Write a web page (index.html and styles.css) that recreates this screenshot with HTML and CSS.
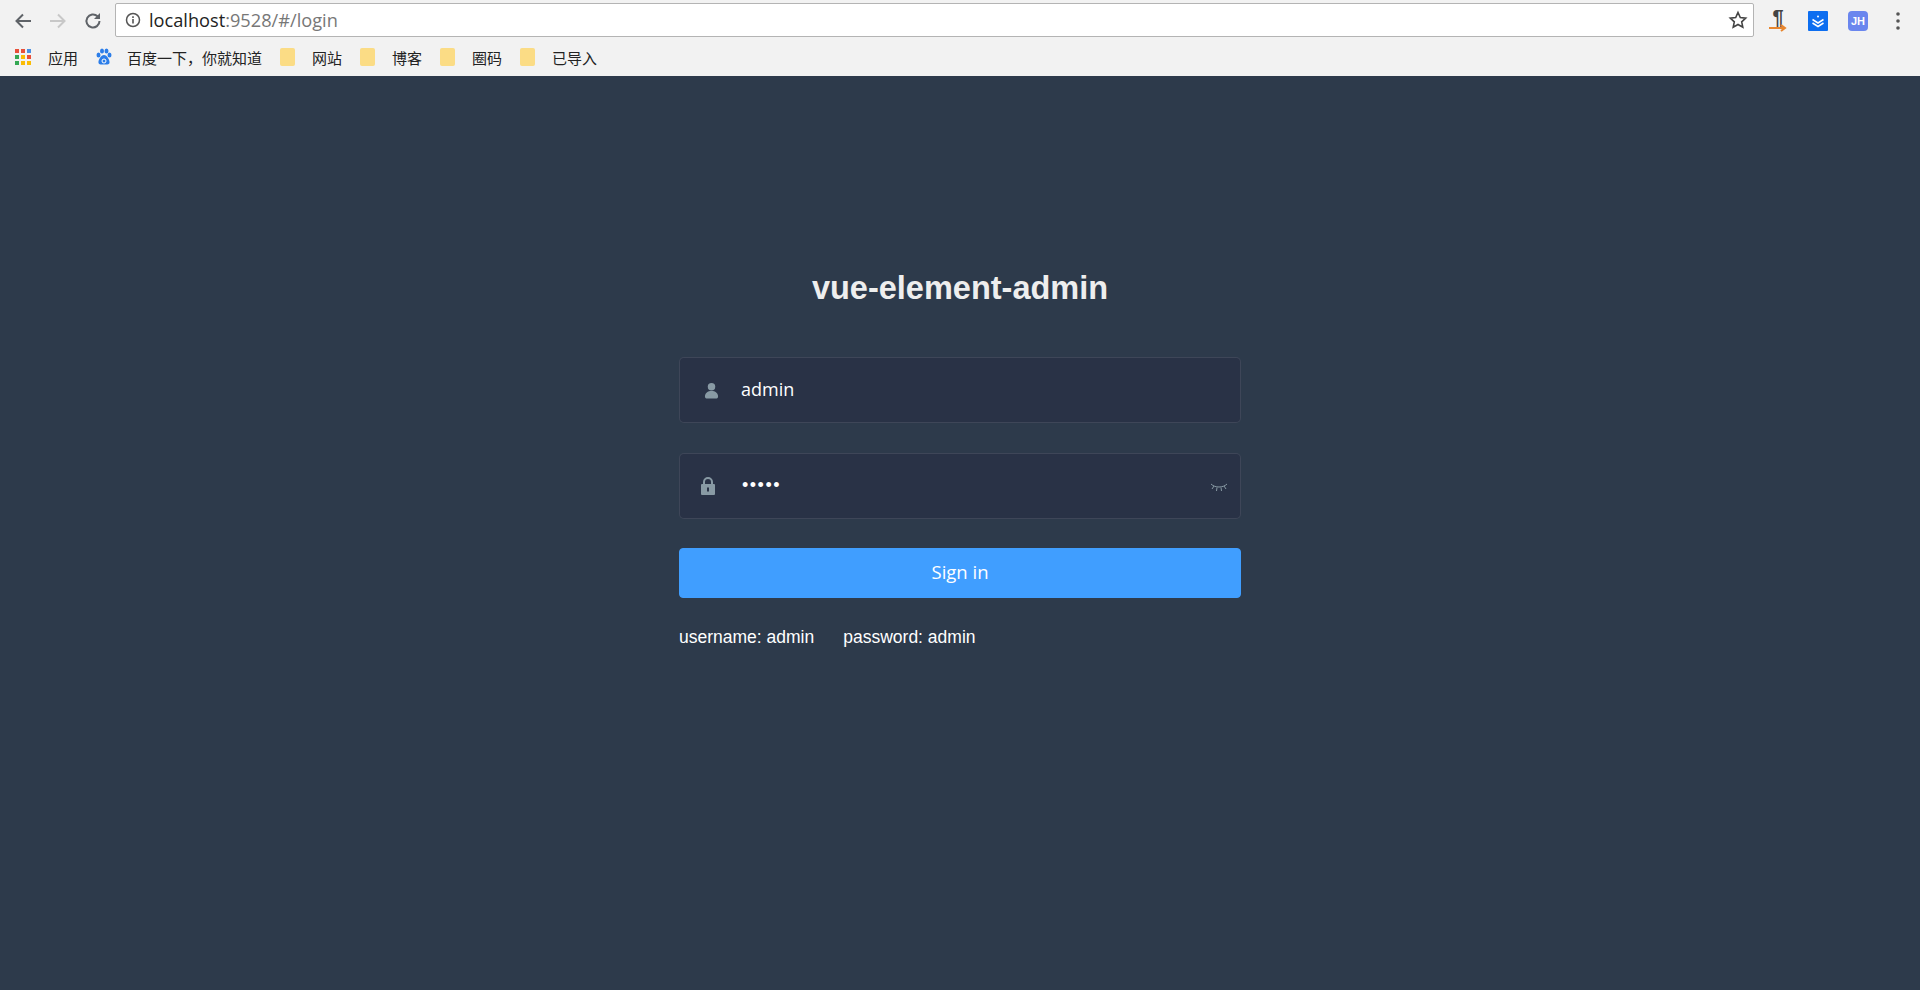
FILE: index.html
```html
<!doctype html>
<html lang="en">
<head>
<meta charset="UTF-8">
<title>vue-element-admin</title>
<link rel="stylesheet" href="styles.css">
</head>
<body>
	<div class="toolbar">
		<svg class="nav" width="22" height="22" viewBox="0 0 22 22"><path d="M19 11H5M11 4.500L4.500 11l6.500 6.500" fill="none" stroke="#5f6368" stroke-width="2"/></svg>
		<svg class="nav" width="22" height="22" viewBox="0 0 22 22"><path d="M3 11h14M11 4.500l6.500 6.500L11 17.500" fill="none" stroke="#c8c8c8" stroke-width="2"/></svg>
		<svg class="nav" width="22" height="22" viewBox="0 0 22 22"><path d="M17.500 11a6.500 6.500 0 1 1-2-4.700" fill="none" stroke="#5f6368" stroke-width="2"/><path d="M18 3v6h-6z" fill="#5f6368"/></svg>
		<div class="address">
			<svg width="16" height="16" viewBox="0 0 16 16"><circle cx="8" cy="8" r="6.500" fill="none" stroke="#555" stroke-width="1.500"/><path d="M7.200 7h1.600v4.500H7.200zM7.200 4.300h1.600v1.600H7.200z" fill="#555"/></svg>
			<span class="url"><b>localhost</b>:9528/#/login</span>
			<svg class="star" width="20" height="20" viewBox="0 0 20 20"><path d="M10 2.500l2.300 5 5.400.6-4 3.700 1.100 5.400-4.800-2.700-4.800 2.700 1.100-5.400-4-3.700 5.400-.6z" fill="none" stroke="#444" stroke-width="1.600"/></svg>
		</div>
		<div class="exts">
			<div class="ext-para">
				<span>¶</span>
				<svg width="20" height="8" viewBox="0 0 20 8"><path d="M1 4h15M13 1l4 3-4 3" fill="none" stroke="#e8862e" stroke-width="2"/></svg>
			</div>
			<svg width="20" height="20" viewBox="0 0 20 20"><rect width="20" height="20" rx="1" fill="#0d6ef0"/><path d="M4.500 8.500l5.500 3.500 5.500-3.500M4.500 12l5.500 3.500 5.500-3.500" fill="none" stroke="#fff" stroke-width="1.500"/><circle cx="10" cy="5.500" r="1" fill="#fff"/></svg>
			<div class="ext-jh">JH</div>
			<svg class="dots" width="4" height="18" viewBox="0 0 4 18"><circle cx="2" cy="2" r="1.800" fill="#555"/><circle cx="2" cy="9" r="1.800" fill="#555"/><circle cx="2" cy="16" r="1.800" fill="#555"/></svg>
		</div>
	</div>
	<div class="bookmarks">
		<div class="bm">
			<svg width="16" height="16" viewBox="0 0 16 16">
				<rect x="0" y="0" width="4" height="4" fill="#e8503a"/><rect x="6" y="0" width="4" height="4" fill="#e8503a"/><rect x="12" y="0" width="4" height="4" fill="#4a90e2"/>
				<rect x="0" y="6" width="4" height="4" fill="#34a853"/><rect x="6" y="6" width="4" height="4" fill="#fbbc05"/><rect x="12" y="6" width="4" height="4" fill="#e8503a"/>
				<rect x="0" y="12" width="4" height="4" fill="#34a853"/><rect x="6" y="12" width="4" height="4" fill="#fbbc05"/><rect x="12" y="12" width="4" height="4" fill="#fbbc05"/>
			</svg>
			<span>应用</span>
		</div>
		<div class="bm bm-baidu">
			<svg width="16" height="18" viewBox="0 0 16 18" fill="#2b7de9"><ellipse cx="2.500" cy="7" rx="2" ry="2.600"/><ellipse cx="6" cy="3" rx="2" ry="2.600"/><ellipse cx="10.500" cy="3" rx="2" ry="2.600"/><ellipse cx="13.500" cy="7" rx="2" ry="2.600"/><path d="M8 7c3 0 6 5 5.500 8-.5 2-3.500 1.500-5.500 1.500s-5 .5-5.500-1.500C2 12 5 7 8 7z"/><circle cx="8" cy="13" r="2" fill="none" stroke="#fff"/></svg>
			<span>百度一下，你就知道</span>
		</div>
		<div class="bm"><i class="folder"></i><span>网站</span></div>
		<div class="bm"><i class="folder"></i><span>博客</span></div>
		<div class="bm"><i class="folder"></i><span>圈码</span></div>
		<div class="bm"><i class="folder"></i><span>已导入</span></div>
	</div>
	<div class="login">
		<div class="form">
			<h3 class="title">vue-element-admin</h3>
			<div class="field">
				<svg class="icon" width="15" height="17" viewBox="0 0 16 17"><circle cx="8" cy="4.500" r="4" fill="#889aa4"/><path d="M1 15c0-4 3-6 7-6s7 2 7 6c0 1-.6 2-1.500 2h-11C1.600 17 1 16 1 15z" fill="#889aa4"/></svg>
				<span class="value">admin</span>
			</div>
			<div class="field">
				<svg class="icon icon-lock" width="14" height="18" viewBox="1 0 14 18"><path d="M4 8V5a4 4 0 0 1 8 0v3" fill="none" stroke="#889aa4" stroke-width="2"/><path d="M2 7h12a1 1 0 0 1 1 1v9a1 1 0 0 1-1 1H2a1 1 0 0 1-1-1V8a1 1 0 0 1 1-1z" fill="#889aa4"/><rect x="7" y="10.500" width="2" height="4" fill="#293246"/></svg>
				<span class="value dots-pw">•••••</span>
				<svg class="eye" width="18" height="10" viewBox="0 0 18 10"><path d="M1 2c4 4 12 4 16 0M4 4L2 7M7 5.500L6.500 9M11 5.500l.5 3.500M14 4l2 3" fill="none" stroke="#889aa4" stroke-width="1"/></svg>
			</div>
			<button class="btn">Sign in</button>
			<div class="tips"><span>username: admin</span><span>password: admin</span></div>
		</div>
	</div>
</body>
</html>
```

FILE: styles.css
```css
html,body{
	height:100%;
}
body{
	margin:0;
	display:flex;
	flex-direction:column;
	background:#2d3a4b;
	font-family:"Liberation Sans","Noto Sans CJK SC",sans-serif;
	overflow:hidden;
}
.toolbar{
	height:42px;
	flex:none;
	display:flex;
	align-items:center;
	background:#f2f2f2;
	padding:0 0 0 12px;
}
.nav{
	margin-right:13px;
}
.address{
	width:1639px;
	height:34px;
	box-sizing:border-box;
	margin:0 0 2px -2px;
	display:flex;
	align-items:center;
	gap:8px;
	padding:0 5px 0 9px;
	background:#fff;
	border:1px solid #b4b4b4;
	border-radius:2px;
}
.url{
	flex:1;
	font-family:"Open Sans","Liberation Sans",sans-serif;
	font-size:18.2px;
	color:#777;
}
.url b{
	font-weight:normal;
	color:#222;
}
.exts{
	flex:1;
	display:flex;
	align-items:center;
	gap:20px;
	padding-left:14px;
}
.ext-para{
	width:20px;
	display:flex;
	flex-direction:column;
	align-items:center;
	font:bold 20px/15px "Liberation Sans",sans-serif;
	color:#444;
}
.ext-para svg{
	margin-top:-1px;
}
.ext-jh{
	width:20px;
	height:20px;
	border-radius:4px;
	background:#6a86ee;
	color:#fff;
	font-size:11px;
	font-weight:bold;
	line-height:20px;
	text-align:center;
}
.dots{
	margin-left:8px;
}
.bookmarks{
	height:34px;
	flex:none;
	display:flex;
	align-items:center;
	gap:18px;
	box-sizing:border-box;
	padding:0 0 4px 15px;
	background:#f2f2f2;
	font-size:15px;
	color:#222;
}
.bm{
	display:flex;
	align-items:center;
	gap:17px;
}
.bm-baidu{
	gap:15px;
}
.folder{
	display:block;
	width:15px;
	height:18px;
	border-radius:2px;
	background:#fbdc85;
}
.login{
	flex:1;
	background:#2d3a4b;
}
.form{
	width:562px;
	margin:0 auto;
}
.title{
	margin:0;
	padding-top:192px;
	height:89px;
	font-size:32.5px;
	line-height:40px;
	font-weight:bold;
	text-align:center;
	color:#eee;
}
.field{
	height:66px;
	box-sizing:border-box;
	margin-bottom:30px;
	display:flex;
	align-items:center;
	padding:0 12px 0 24px;
	background:#293246;
	border:1px solid rgba(255,255,255,.1);
	border-radius:5px;
}
.icon{
	flex:none;
}
.value{
	flex:1;
	margin:0 0 2px 22px;
	font-family:"Open Sans","Liberation Sans",sans-serif;
	font-size:18px;
	color:#fff;
}
.icon-lock{
	margin-left:-3px;
}
.dots-pw{
	margin-left:27px;
	font-family:"Liberation Sans",sans-serif;
	letter-spacing:1.5px;
}
.eye{
	margin-top:2px;
}
.btn{
	display:block;
	width:100%;
	height:50px;
	margin:-1px 0 28px;
	padding-bottom:5px;
	background:#409eff;
	border:1px solid #409eff;
	border-radius:4px;
	color:#fff;
	font-family:"Open Sans","Liberation Sans",sans-serif;
	font-size:18.5px;
}
.tips{
	display:flex;
	gap:29px;
	font-size:17.5px;
	line-height:22px;
	color:#fff;
}
```
